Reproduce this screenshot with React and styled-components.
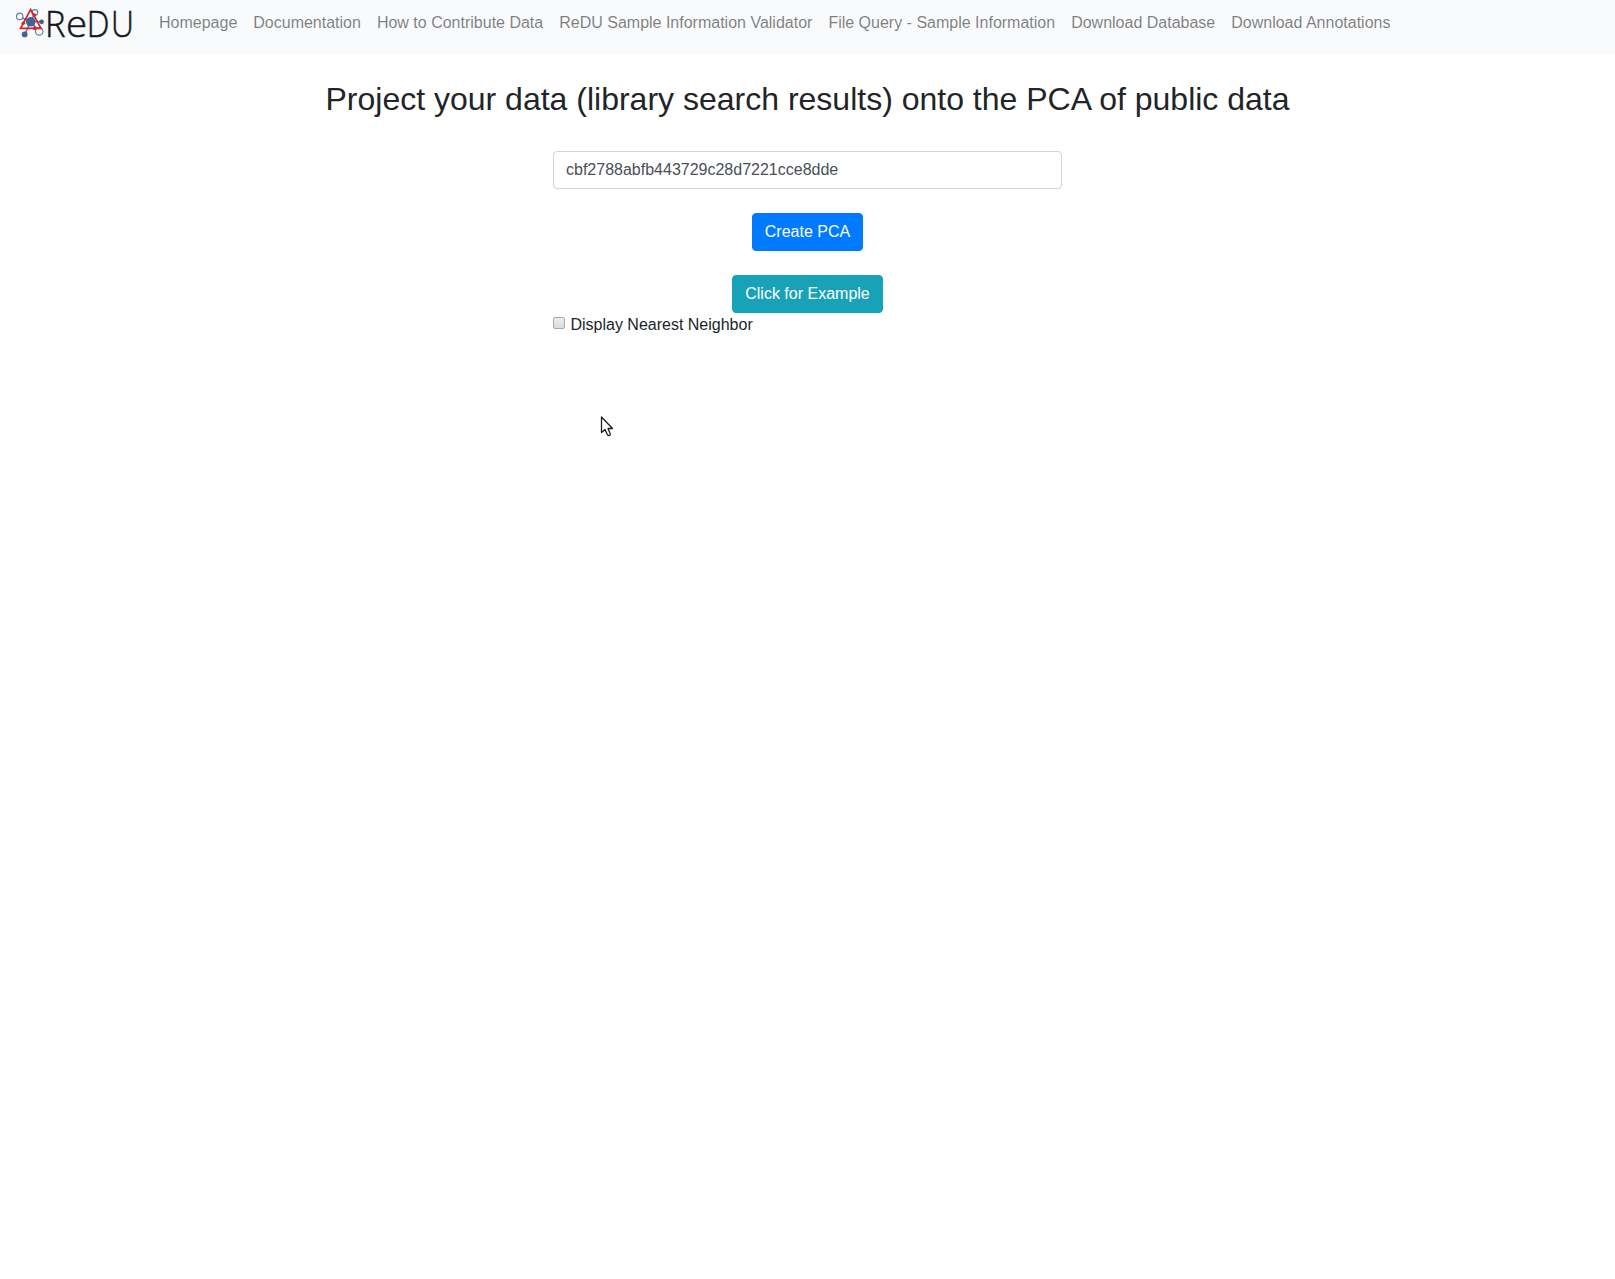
import React, { useState } from "react";
import styled, { createGlobalStyle } from "styled-components";

const GlobalStyle = createGlobalStyle`
  *, *::before, *::after { box-sizing: border-box; }
  body {
    margin: 0;
    background: #fff;
    color: #212529;
    font-family: "Liberation Sans", Arial, sans-serif;
    font-size: 16px;
    line-height: 1.5;
  }
`;

const Navbar = styled.nav`
  display: flex;
  align-items: flex-start;
  height: 55px;
  padding: 0 16px;
  background: #f8fafc;
`;

const Brand = styled.a`
  display: block;
  width: 119px;
  height: 55px;
  margin-right: 16px;
`;

const LogoArt = styled.svg`
  display: block;
  overflow: visible;
`;

const NavList = styled.ul`
  display: flex;
  margin: 0;
  padding: 11px 0 0;
  list-style: none;
`;

const NavLink = styled.a`
  display: block;
  padding: 0 8px;
  color: rgba(0, 0, 0, 0.5);
  text-decoration: none;
  white-space: nowrap;
`;

const Main = styled.main`
  display: flex;
  flex-direction: column;
  align-items: center;
  padding-top: 25px;
`;

const Title = styled.h2`
  margin: 0 0 32px;
  font-size: 32px;
  font-weight: 500;
  line-height: 39px;
`;

const Form = styled.form`
  display: flex;
  flex-direction: column;
  align-items: center;
  width: 509px;
`;

const TextInput = styled.input`
  width: 100%;
  height: 38px;
  margin: 0 0 24px;
  padding: 6px 12px;
  border: 1px solid #ced4da;
  border-radius: 4px;
  background: #fff;
  color: #495057;
  font: inherit;
  outline: none;
`;

const Button = styled.button`
  height: 38px;
  margin: 0 0 ${(p) => p.$gap}px;
  padding: 6px 12px;
  border: 1px solid ${(p) => p.$color};
  border-radius: 4px;
  background: ${(p) => p.$color};
  color: #fff;
  font: inherit;
`;

const CheckLabel = styled.label`
  display: flex;
  align-self: flex-start;
  gap: 5.45px;
`;

const Checkbox = styled.input`
  appearance: none;
  width: 12px;
  height: 12px;
  margin: 4px 0 0;
  border: 1px solid #a9a9a9;
  border-radius: 2px;
  background: linear-gradient(#ededed, #dcdcdc);
  &:checked { background: #007bff; }
`;

const Pointer = styled.svg`
  position: absolute;
  left: 600px;
  top: 415px;
`;

function Logo() {
  return (
    <LogoArt width="119" height="55" viewBox="16 0 119 55" role="img" aria-label="ReDU">
      <g fill="none" stroke="#5f80ad" strokeWidth="1.2">
        <circle cx="19.7" cy="16.4" r="3.2" />
        <circle cx="34.9" cy="12.5" r="2.8" />
        <circle cx="39.2" cy="31.4" r="3.7" />
        <path d="M22.4 18L30.7 21.7L34 14.5M30.7 21.7L41.5 21.7M30.7 21.7L24.7 34.3M30.7 21.7L37 28.5" strokeWidth="1.5" />
      </g>
      <path d="M30.6 9.6L20.5 28.3H41Z" fill="none" stroke="#df2018" strokeWidth="1.7" />
      <g fill="#3f639b">
        <circle cx="30.7" cy="21.8" r="4.8" />
        <circle cx="41.6" cy="21.8" r="2.4" />
        <circle cx="24.7" cy="34.4" r="2.9" />
      </g>
      <g fill="#c92a2d">
        <circle cx="34.3" cy="15" r="1.8" />
        <circle cx="23.3" cy="23.2" r="1.8" />
        <circle cx="34.7" cy="28.2" r="1.9" />
      </g>
      <g
        fill="#15171a"
        stroke="#15171a"
        strokeWidth=".5"
        fontFamily="'Open Sans', sans-serif"
        fontWeight="300"
        fontSize="37"
      >
        <text transform="translate(45 36.5) scale(.93 1)">R</text>
        <text transform="translate(65.9 36.5) scale(1.04 1)">e</text>
        <text transform="translate(86.7 36.5) scale(.87 1)">D</text>
        <text transform="translate(110.9 36.5) scale(.86 1)">U</text>
      </g>
    </LogoArt>
  );
}

const links = [
  "Homepage",
  "Documentation",
  "How to Contribute Data",
  "ReDU Sample Information Validator",
  "File Query - Sample Information",
  "Download Database",
  "Download Annotations",
];

export default function App() {
  const [task, setTask] = useState("cbf2788abfb443729c28d7221cce8dde");
  return (
    <>
      <GlobalStyle />
      <Navbar>
        <Brand href="#"><Logo /></Brand>
        <NavList>
          {links.map((label) => (
            <li key={label}><NavLink href="#">{label}</NavLink></li>
          ))}
        </NavList>
      </Navbar>
      <Main>
        <Title>Project your data (library search results) onto the PCA of public data</Title>
        <Form onSubmit={(e) => e.preventDefault()}>
          <TextInput value={task} onChange={(e) => setTask(e.target.value)} spellCheck={false} />
          <Button type="submit" $color="#007bff" $gap={24}>Create PCA</Button>
          <Button type="button" $color="#17a2b8" $gap={0}>Click for Example</Button>
          <CheckLabel>
            <Checkbox type="checkbox" />
            Display Nearest Neighbor
          </CheckLabel>
        </Form>
      </Main>
      <Pointer width="16" height="24" viewBox="0 0 16 24" aria-hidden="true">
        <path
          d="M1.5 2V17.5L5 14.4L7.3 19.6Q8.3 21 9.8 20.2Q10.8 19.4 10 18L8 13.5H12.5Z"
          fill="#fff"
          stroke="#1c1c22"
          strokeWidth="1.3"
          strokeLinejoin="round"
        />
      </Pointer>
    </>
  );
}
